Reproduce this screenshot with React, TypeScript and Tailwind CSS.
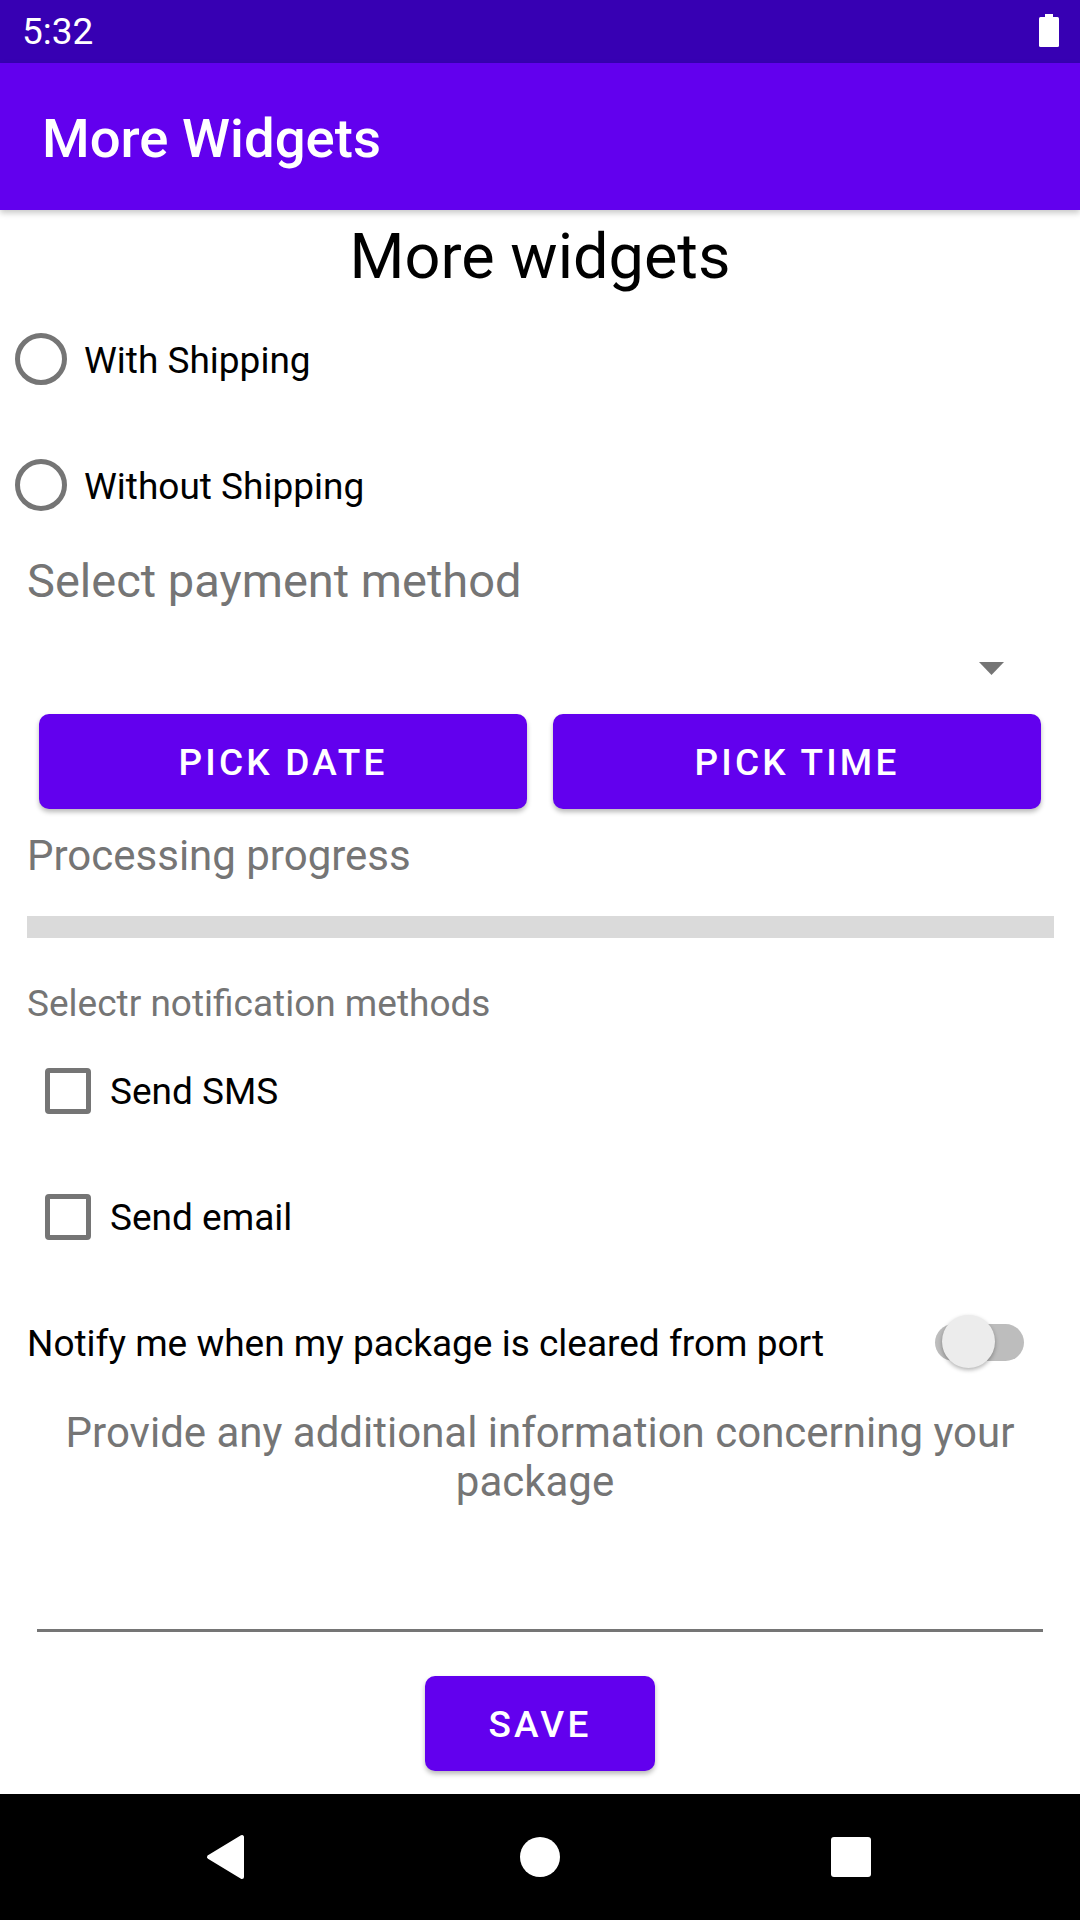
import React from "react";

function Radio({ label }: { label: string }) {
  return (
    <div className="h-[126px] flex items-center">
      <div className="ml-[15px] w-[52px] h-[52px] rounded-full border-[5px] border-[#757575]" />
      <span className="ml-[17px] pt-[2px] text-[37px] leading-[43px] text-black">{label}</span>
    </div>
  );
}

function Check({ label }: { label: string }) {
  return (
    <div className="h-[126px] flex items-center">
      <div className="ml-[45px] w-[46px] h-[46px] rounded-[4px] border-[5px] border-[#757575]" />
      <span className="ml-[19px] pt-[1px] text-[37px] leading-[43px] text-black">{label}</span>
    </div>
  );
}

function PurpleButton({ label, className }: { label: string; className?: string }) {
  return (
    <div
      className={
        "h-[95px] pt-[3px] rounded-[10px] bg-[#6200EE] flex items-center justify-center text-white text-[37px] font-medium tracking-[3.2px] shadow-[0_3px_5px_rgba(0,0,0,0.28)] " +
        (className ?? "")
      }
    >
      {label}
    </div>
  );
}

export default function App() {
  return (
    <div className="w-[1080px] h-[1920px] flex flex-col bg-white font-['Roboto',sans-serif] overflow-hidden">
      {/* Status bar */}
      <div className="h-[63px] bg-[#3700B3] flex items-center justify-between pl-[22px] pr-[21px]">
        <span className="text-white text-[37px] leading-[43px]">5:32</span>
        <svg width="20" height="34" viewBox="0 0 20 34" className="mt-[-2px]">
          <rect x="6" y="0" width="8" height="4" fill="#fff" />
          <rect x="0" y="3" width="20" height="30" rx="1.5" fill="#fff" />
        </svg>
      </div>

      {/* App bar */}
      <div className="relative z-10 h-[147px] bg-[#6200EE] flex items-center pl-[42px] shadow-[0_3px_6px_rgba(0,0,0,0.22)]">
        <span className="text-white text-[54.5px] font-medium leading-[64px] pt-[2px]">More Widgets</span>
      </div>

      {/* Content */}
      <div className="flex-1 flex flex-col">
        <div className="h-[86px] pt-[10px] text-center text-black text-[63px] leading-[74px]">More widgets</div>

        <Radio label="With Shipping" />
        <Radio label="Without Shipping" />

        <div className="mt-[5px] pl-[27px] text-[47px] leading-[55px] text-[#757575]">Select payment method</div>
        <div className="h-[106px] flex justify-end pt-[54px] pr-[76px]">
          <svg width="25" height="13" viewBox="0 0 25 13">
            <polygon points="0,0 25,0 12.5,13" fill="#757575" />
          </svg>
        </div>

        <div className="flex px-[39px] gap-[26px]">
          <PurpleButton label="PICK DATE" className="flex-1" />
          <PurpleButton label="PICK TIME" className="flex-1" />
        </div>

        <div className="mt-[22px] pl-[27px] text-[42px] leading-[49px] text-[#757575]">Processing progress</div>
        <div className="mt-[36px] ml-[27px] mr-[26px] h-[22px] bg-[#dadada]" />

        <div className="mt-[44px] pl-[27px] text-[37px] leading-[43px] text-[#757575]">Selectr notification methods</div>

        <div className="mt-[3px]">
          <Check label="Send SMS" />
          <Check label="Send email" />
        </div>

        <div className="h-[122px] flex items-center pl-[27px] pr-[56px]">
          <span className="pt-[4px] text-[37px] leading-[43px] text-black">Notify me when my package is cleared from port</span>
          <div className="relative ml-auto w-[89px] h-[53px]">
            <div className="absolute left-0 top-[9px] w-[89px] h-[37px] rounded-full bg-[#bdbdbd]" />
            <div className="absolute left-[7px] top-0 w-[53px] h-[53px] rounded-full bg-[#ececec] shadow-[0_2px_4px_rgba(0,0,0,0.3)]" />
          </div>
        </div>

        <div className="mt-[6px] text-center text-[42px] leading-[49px] text-[#757575]">
          Provide any additional information concerning your
          <br />
          <span className="pr-[10px]">package</span>
        </div>
        <div className="mt-[123px] mx-[37px] h-[3px] bg-[#757575]" />

        <div className="mt-[44px] flex justify-center">
          <PurpleButton label="SAVE" className="w-[230px]" />
        </div>
      </div>

      {/* Nav bar */}
      <div className="h-[126px] bg-black flex items-center">
        <div className="flex-1 relative h-full">
          <svg width="40" height="46" viewBox="0 0 40 46" className="absolute left-[205px] top-[40px]">
            <path d="M37 3 L37 43 L4 23 Z" fill="#fff" stroke="#fff" strokeWidth="4" strokeLinejoin="round" />
          </svg>
          <div className="absolute left-[520px] top-[43px] w-[40px] h-[40px] rounded-full bg-white" />
          <div className="absolute left-[831px] top-[43px] w-[40px] h-[40px] rounded-[3px] bg-white" />
        </div>
      </div>
    </div>
  );
}
